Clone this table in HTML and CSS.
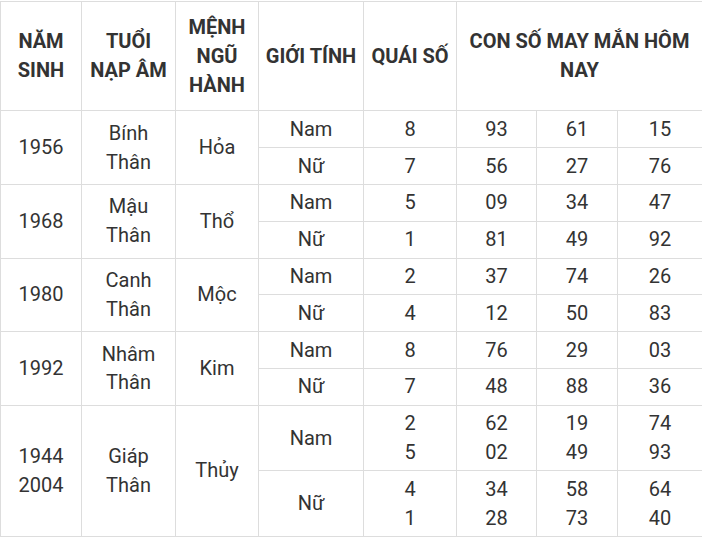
FILE: index.html
```html
<!DOCTYPE html>
<html lang="vi">
<head>
<meta charset="utf-8">
<title>Con số may mắn</title>
<link rel="stylesheet" href="styles.css">
</head>
<body>
<table class="luck">
  <colgroup>
    <col class="c1"><col class="c2"><col class="c3"><col class="c4"><col class="c5"><col class="c6"><col class="c7"><col class="c8">
  </colgroup>
  <thead>
    <tr>
      <th>NĂM SINH</th>
      <th>TUỔI NẠP ÂM</th>
      <th>MỆNH NGŨ HÀNH</th>
      <th>GIỚI TÍNH</th>
      <th>QUÁI SỐ</th>
      <th colspan="3">CON SỐ MAY MẮN HÔM NAY</th>
    </tr>
  </thead>
  <tbody>
    <tr><td rowspan="2">1956</td><td rowspan="2">Bính<br>Thân</td><td rowspan="2">Hỏa</td><td>Nam</td><td>8</td><td>93</td><td>61</td><td>15</td></tr>
    <tr><td>Nữ</td><td>7</td><td>56</td><td>27</td><td>76</td></tr>
    <tr><td rowspan="2">1968</td><td rowspan="2">Mậu<br>Thân</td><td rowspan="2">Thổ</td><td>Nam</td><td>5</td><td>09</td><td>34</td><td>47</td></tr>
    <tr><td>Nữ</td><td>1</td><td>81</td><td>49</td><td>92</td></tr>
    <tr><td rowspan="2">1980</td><td rowspan="2">Canh<br>Thân</td><td rowspan="2">Mộc</td><td>Nam</td><td>2</td><td>37</td><td>74</td><td>26</td></tr>
    <tr><td>Nữ</td><td>4</td><td>12</td><td>50</td><td>83</td></tr>
    <tr><td rowspan="2">1992</td><td rowspan="2">Nhâm<br>Thân</td><td rowspan="2">Kim</td><td>Nam</td><td>8</td><td>76</td><td>29</td><td>03</td></tr>
    <tr><td>Nữ</td><td>7</td><td>48</td><td>88</td><td>36</td></tr>
    <tr><td rowspan="2">1944<br>2004</td><td rowspan="2">Giáp<br>Thân</td><td rowspan="2">Thủy</td><td>Nam</td><td>2<br>5</td><td>62<br>02</td><td>19<br>49</td><td>74<br>93</td></tr>
    <tr><td>Nữ</td><td>4<br>1</td><td>34<br>28</td><td>58<br>73</td><td>64<br>40</td></tr>
  </tbody>
</table>
</body>
</html>
```
FILE: styles.css
```css
html, body {
  margin: 0;
  padding: 0;
  background: #fff;
}
body {
  padding-top: 1px;
  font-family: Roboto, "Liberation Sans", Arial, sans-serif;
  font-size: 20px;
  line-height: 28.8px;
  color: #333;
}
.luck {
  border-collapse: collapse;
  table-layout: fixed;
  width: 702px;
}
.c1 { width: 81px; }
.c2 { width: 94px; }
.c3 { width: 83px; }
.c4 { width: 105px; }
.c5 { width: 93px; }
.c6 { width: 80px; }
.c7 { width: 81px; }
.c8 { width: 85px; }
.luck th,
.luck td {
  border: 1px solid #ddd;
  text-align: center;
  vertical-align: middle;
}
.luck th {
  font-weight: 700;
  padding: 11px 4px;
  color: #333;
}
.luck td {
  padding: 3.5px 4px;
}
```
